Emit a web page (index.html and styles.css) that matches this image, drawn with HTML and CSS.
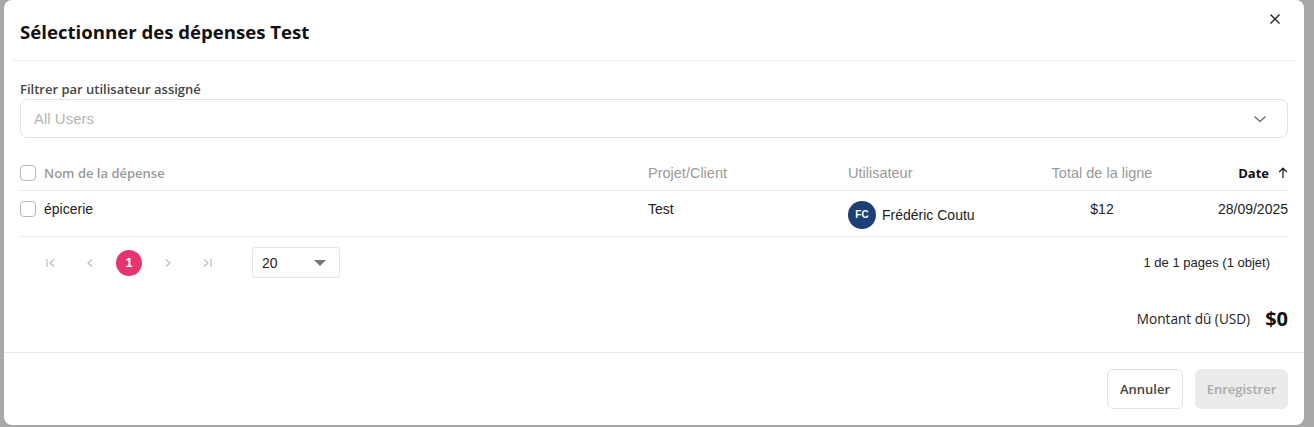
FILE: index.html
```html
<!DOCTYPE html>
<html lang="fr">

<head>
  <meta charset="UTF-8" />
  <meta name="viewport" content="width=device-width, initial-scale=1.0" />
  <title>Sélectionner des dépenses</title>
  <link rel="stylesheet" href="styles.css">
</head>

<body>
  <div class="modal">
    <div class="modal-header">
      <h1>Sélectionner des dépenses Test</h1>
      <button class="close-btn" aria-label="Fermer">
        <svg width="12" height="12" viewBox="0 0 12 12">
          <path d="M1.5 1.5 L10.5 10.5 M10.5 1.5 L1.5 10.5" stroke="#222" stroke-width="1.4" fill="none" />
        </svg>
      </button>
    </div>

    <div class="modal-body">
      <label class="filter-label">Filtrer par utilisateur assigné</label>
      <div class="select">
        <span class="placeholder">All Users</span>
        <svg width="14" height="14" viewBox="0 0 14 14">
          <path d="M1.5 4.5 L7 9.5 L12.5 4.5" stroke="#777" stroke-width="1.6" fill="none" />
        </svg>
      </div>

      <div class="table">
        <div class="tr th">
          <div class="cell name"><span class="checkbox"></span>Nom de la dépense</div>
          <div class="cell">Projet/Client</div>
          <div class="cell">Utilisateur</div>
          <div class="cell center">Total de la ligne</div>
          <div class="cell right sorted">Date
            <svg width="10" height="12" viewBox="0 0 10 12">
              <path d="M5 11 V1.5 M1.2 5 L5 1.2 L8.8 5" stroke="#222" stroke-width="1.3" fill="none" />
            </svg>
          </div>
        </div>
        <div class="tr">
          <div class="cell name"><span class="checkbox"></span>épicerie</div>
          <div class="cell">Test</div>
          <div class="cell user"><span class="avatar">FC</span>Frédéric Coutu</div>
          <div class="cell center">$12</div>
          <div class="cell right">28/09/2025</div>
        </div>
      </div>

      <div class="pager">
        <div class="pages">
          <span class="page-btn">
            <svg width="12" height="12" viewBox="0 0 12 12">
              <path d="M2 2 V10 M9 2.5 L5 6 L9 9.5" stroke="#bbb" stroke-width="1.2" fill="none" />
            </svg>
          </span>
          <span class="page-btn">
            <svg width="12" height="12" viewBox="0 0 12 12">
              <path d="M8 2.5 L4 6 L8 9.5" stroke="#bbb" stroke-width="1.2" fill="none" />
            </svg>
          </span>
          <span class="page-btn current">1</span>
          <span class="page-btn">
            <svg width="12" height="12" viewBox="0 0 12 12">
              <path d="M4 2.5 L8 6 L4 9.5" stroke="#bbb" stroke-width="1.2" fill="none" />
            </svg>
          </span>
          <span class="page-btn">
            <svg width="12" height="12" viewBox="0 0 12 12">
              <path d="M3 2.5 L7 6 L3 9.5 M10 2 V10" stroke="#bbb" stroke-width="1.2" fill="none" />
            </svg>
          </span>
          <div class="page-size">
            <span>20</span>
            <svg width="12" height="8" viewBox="0 0 12 8">
              <path d="M0 1 H12 L6 7 Z" fill="#777" />
            </svg>
          </div>
        </div>
        <div class="page-info">1 de 1 pages (1 objet)</div>
      </div>

      <div class="total">
        <span class="total-label">Montant dû (USD)</span>
        <span class="total-value">$0</span>
      </div>
    </div>

    <div class="modal-footer">
      <button class="btn cancel">Annuler</button>
      <button class="btn primary" disabled>Enregistrer</button>
    </div>
  </div>
</body>

</html>
```

FILE: styles.css
```css
body {
  margin: 0;
  padding: 0;
  background-color: #a8a8a8;
  font-family: "Liberation Sans", Arial, sans-serif;
  color: #222;
  overflow: hidden;
}

.modal {
  width: 1300px;
  height: 425px;
  margin-left: 4px;
  background-color: #fff;
  border-radius: 8px;
  display: flex;
  flex-direction: column;
}

/* Header */
.modal-header {
  height: 61px;
  margin: 0 8px;
  padding: 0 8px;
  display: flex;
  align-items: center;
  justify-content: space-between;
  border-bottom: 1px solid #f0f0f0;
  box-sizing: border-box;
}

.modal-header h1 {
  margin: 0 0 -3px 0;
  font-family: "Open Sans", sans-serif;
  font-size: 18.6px;
  font-weight: 700;
  color: #111;
}

.close-btn {
  border: none;
  background: none;
  padding: 0;
  margin: -22px 6px 0 0;
  width: 14px;
  height: 14px;
  display: flex;
  align-items: center;
  justify-content: center;
}

/* Body */
.modal-body {
  padding: 0 16px;
  flex: 1;
}

.filter-label {
  display: block;
  margin-top: 19px;
  font-family: "Open Sans", sans-serif;
  font-size: 13px;
  font-weight: 600;
  color: #444;
  line-height: 18px;
}

.select {
  margin-top: 1px;
  height: 39px;
  border: 1px solid #e3e3e3;
  border-radius: 7px;
  box-sizing: border-box;
  display: flex;
  align-items: center;
  justify-content: space-between;
  padding: 0 20px 0 13px;
}

.placeholder {
  font-size: 15px;
  color: #b5b5b5;
}

/* Table */
.table {
  margin-top: 23px;
}

.tr {
  display: grid;
  grid-template-columns: 628px 200px 190px 128px 1fr;
  border-bottom: 1px solid #ebebeb;
  padding: 8px 0 7px;
  font-size: 14px;
  line-height: 20px;
  align-items: start;
}

.tr.th {
  padding: 2px 0 7px;
  font-size: 14.5px;
  color: #999;
}

.cell {
  display: flex;
  align-items: center;
}

.cell.center {
  justify-content: center;
}

.cell.right {
  justify-content: flex-end;
}

.th .name {
  font-family: "Open Sans", sans-serif;
  font-size: 13px;
  font-weight: 600;
}

.th .sorted {
  font-family: "Open Sans", sans-serif;
  font-size: 13px;
  font-weight: 700;
  color: #111;
  gap: 9px;
}

.checkbox {
  width: 16px;
  height: 16px;
  border: 1px solid #b8b8b8;
  border-radius: 4px;
  box-sizing: border-box;
  margin-right: 8px;
}

.user {
  margin-top: 2px;
}

.avatar {
  width: 28px;
  height: 28px;
  border-radius: 50%;
  background-color: #1d3f78;
  color: #fff;
  font-size: 10px;
  font-weight: 700;
  display: flex;
  align-items: center;
  justify-content: center;
  margin-right: 6px;
}

/* Pagination */
.pager {
  display: flex;
  align-items: center;
  justify-content: space-between;
  margin-top: 10px;
  padding: 0 18px;
}

.pages {
  display: flex;
  align-items: center;
  gap: 13px;
}

.page-btn {
  width: 26px;
  height: 26px;
  display: flex;
  align-items: center;
  justify-content: center;
  border-radius: 50%;
}

.page-btn.current {
  background-color: #e6356c;
  color: #fff;
  font-size: 13px;
  font-weight: 700;
}

.page-size {
  margin-left: 19px;
  width: 88px;
  height: 31px;
  border: 1px solid #e3e3e3;
  border-radius: 3px;
  box-sizing: border-box;
  display: flex;
  align-items: center;
  justify-content: space-between;
  padding: 0 13px 0 9px;
  font-size: 14px;
}

.page-info {
  font-size: 13px;
  color: #222;
}

/* Total */
.total {
  display: flex;
  justify-content: flex-end;
  align-items: center;
  gap: 15px;
  margin-top: 27px;
}

.total-label {
  font-family: "Open Sans", sans-serif;
  font-size: 13.6px;
  color: #222;
}

.total-value {
  font-family: "Open Sans", sans-serif;
  font-size: 20px;
  font-weight: 700;
  color: #111;
}

/* Footer */
.modal-footer {
  border-top: 1px solid #e8e8e8;
  padding: 16px;
  display: flex;
  justify-content: flex-end;
  gap: 12px;
}

.btn {
  height: 40px;
  padding: 0;
  border: 1px solid #e2e2e2;
  border-radius: 6px;
  background-color: #fff;
  font-family: "Open Sans", sans-serif;
  font-size: 13px;
  font-weight: 600;
  color: #444;
}

.btn.cancel {
  width: 76px;
}

.btn.primary {
  width: 93px;
  background-color: #ebebeb;
  border-color: #ebebeb;
  color: #a9a9a9;
}
```
